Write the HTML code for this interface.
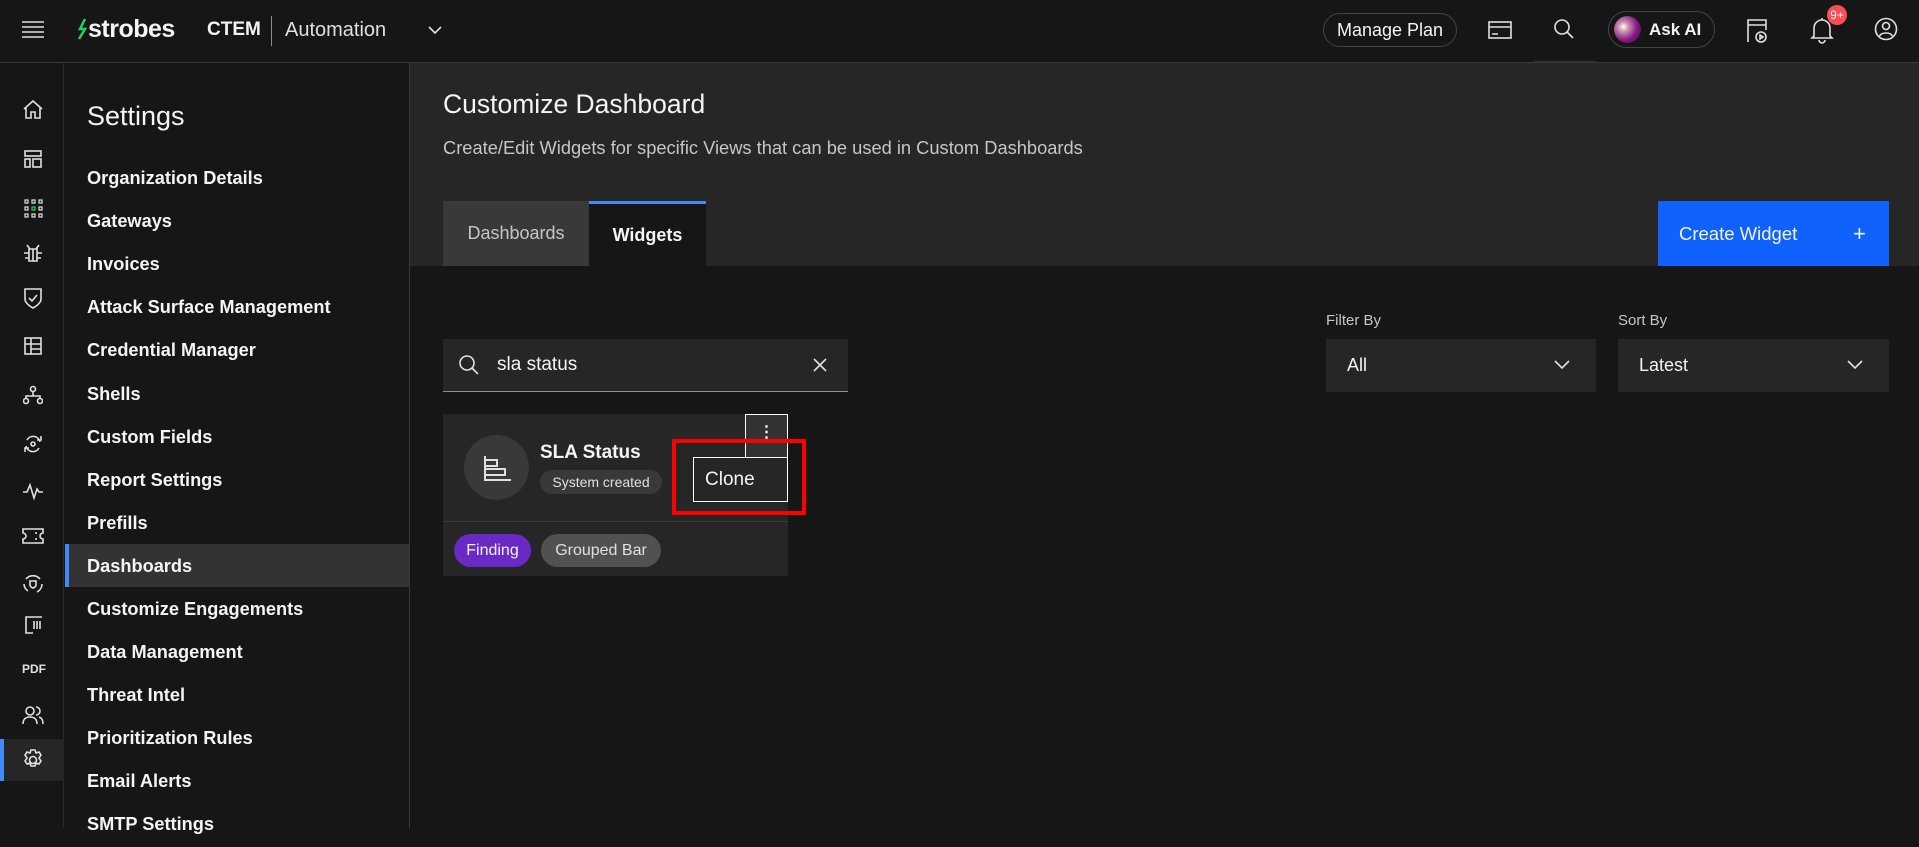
<!DOCTYPE html>
<html><head><meta charset="utf-8"><style>
*{box-sizing:border-box;margin:0;padding:0}
body{width:1919px;height:828px;overflow:hidden;background:#161616;font-family:"Liberation Sans",sans-serif;color:#f4f4f4;position:relative}
.a{position:absolute}
.hdr{left:0;top:0;width:1919px;height:63px;background:#161616;border-bottom:1px solid #393939}
.rail{left:0;top:63px;width:64px;height:765px;background:#161616;border-right:1px solid #2a2a2a}
.nav{left:65px;top:63px;width:345px;height:765px;background:#161616;border-right:1px solid #393939}
.ni{position:absolute;left:0;width:344px;height:43px;line-height:45px;padding-left:22px;font-size:18.2px;font-weight:bold;color:#f4f4f4}
.ni.act{background:#333;border-left:4px solid #4589ff;padding-left:18px}
.top{left:410px;top:63px;width:1509px;height:203px;background:#262626}
svg{position:absolute;fill:none;stroke:#e0e0e0;stroke-width:1.6}
.chip{position:absolute;border-radius:14px;font-size:15px;text-align:center}
</style></head><body>
<div class="a hdr"></div>
<!-- header -->
<svg style="left:21px;top:20px" width="24" height="18"><path d="M1 2h22M1 7h22M1 12h22M1 17h22"/></svg>
<svg style="left:76px;top:17px;stroke:#24d160;stroke-width:2.5" width="12" height="24"><path d="M9 2L4 12h5L3 22"/></svg>
<div class="a" style="left:88px;top:15px;font-size:25px;font-weight:bold;color:#f4f4f4;letter-spacing:-0.5px">strobes</div>
<div class="a" style="left:207px;top:19px;font-size:19px;font-weight:bold">CTEM</div>
<div class="a" style="left:271px;top:16px;width:1px;height:30px;background:#8d8d8d"></div>
<div class="a" style="left:285px;top:19px;font-size:20px;color:#e0e0e0">Automation</div>
<svg style="left:427px;top:24px" width="16" height="12"><path d="M2 3l6 6 6-6"/></svg>
<div class="a" style="left:1323px;top:13px;width:134px;height:34px;border:1px solid #444;border-radius:17px;font-size:18px;line-height:32px;text-align:center">Manage Plan</div>
<svg style="left:1488px;top:20px" width="24" height="20"><rect x="1" y="2" width="22" height="16"/><path d="M1 7h22M4 14h6"/></svg>
<svg style="left:1553px;top:18px" width="22" height="22"><circle cx="9" cy="9" r="7"/><path d="M14 14l6 6"/></svg>
<div class="a" style="left:1534px;top:61px;width:61px;height:2px;background:#333"></div>
<div class="a" style="left:1608px;top:11px;width:107px;height:37px;border:1px solid #444;border-radius:19px"></div>
<div class="a" style="left:1614px;top:16px;width:27px;height:27px;border-radius:50%;background:radial-gradient(circle at 35% 40%,#fff 0,#c9a 20%,#8a1a8a 55%,#2a0a2a 100%)"></div>
<div class="a" style="left:1649px;top:20px;font-size:17px;font-weight:bold">Ask AI</div>
<svg style="left:1746px;top:18px" width="24" height="26"><path d="M2 24V2h18v10M2 7h18"/><circle cx="15" cy="19" r="5"/><path d="M14 17v4l3-2z"/></svg>
<svg style="left:1810px;top:16px" width="24" height="28"><path d="M4 20V12a8 8 0 0116 0v8l2 2H2zM9 24a3 3 0 006 0M12 2v2"/></svg>
<div class="a" style="left:1827px;top:5px;width:20px;height:20px;border-radius:10px;background:#fa4d56;font-size:12px;line-height:20px;text-align:center">9+</div>
<svg style="left:1874px;top:17px" width="24" height="24"><circle cx="12" cy="12" r="10.5"/><circle cx="12" cy="9" r="3.5"/><path d="M5.5 19c2-4 11-4 13 0"/></svg>
<!-- rail -->
<div class="a rail"></div>
<div class="a" style="left:0;top:739px;width:64px;height:42px;background:#262626;border-left:4px solid #4589ff"></div>
<svg style="left:22px;top:99px" width="22" height="20"><path d="M2 10L11 2l9 8M4 8v11h5v-6h4v6h5V8"/></svg>
<svg style="left:23px;top:149px" width="20" height="20"><rect x="2" y="2" width="16" height="5"/><rect x="2" y="10" width="5" height="8"/><rect x="10" y="10" width="8" height="8"/></svg>
<svg style="left:23px;top:198px;stroke-width:1.2" width="20" height="20"><path d="M2 2h3v3H2zM9 2h3v3H9zM16 2h3v3h-3zM2 9h3v3H2zM16 9h3v3h-3zM2 16h3v3H2zM9 16h3v3H9zM16 16h3v3h-3z"/><path d="M9 9h3v3H9z" stroke="#24d160"/></svg>
<svg style="left:22px;top:242px" width="22" height="22"><path d="M7 7h8v12H7zM11 7v12M7 11H2M15 11h5M7 16H3M15 16h4M8 7L5 3M14 7l3-4"/></svg>
<svg style="left:23px;top:287px" width="20" height="22"><path d="M2 2h16v10c0 5-8 9-8 9s-8-4-8-9z M6 11l3 3 5-6"/></svg>
<svg style="left:23px;top:336px" width="20" height="20"><rect x="2" y="2" width="16" height="16"/><path d="M2 8h16M8 2v16M8 13h10"/></svg>
<svg style="left:23px;top:385px" width="20" height="20"><circle cx="10" cy="4" r="2.5"/><circle cx="3" cy="16" r="2.5"/><circle cx="17" cy="16" r="2.5"/><path d="M10 7v4M3 13v-2h14v2"/></svg>
<svg style="left:23px;top:434px" width="20" height="20"><path d="M17 8a7 7 0 00-13-2M3 12a7 7 0 0013 2M14 6h4V2M6 14H2v4"/><circle cx="10" cy="10" r="2"/></svg>
<svg style="left:22px;top:481px" width="22" height="20"><path d="M1 11h4l3-7 4 13 3-9 2 3h4"/></svg>
<svg style="left:22px;top:527px" width="22" height="18"><path d="M1 2h20v4a3 3 0 000 6v4H1v-4a3 3 0 000-6z M14 5v2M14 11v2"/></svg>
<svg style="left:22px;top:573px" width="22" height="22"><path d="M4 6a9 9 0 0114 0M20 11a9 9 0 01-5 8M2 11a9 9 0 004 7"/><path d="M8 8h6v4c0 2-3 3-3 3s-3-1-3-3z"/></svg>
<svg style="left:24px;top:615px" width="20" height="20"><path d="M9 2H2v16h7M7 2h11M13 6v8M16 6v8M10 6v8"/></svg>
<div class="a" style="left:22px;top:662px;font-size:12px;font-weight:bold;color:#e0e0e0">PDF</div>
<svg style="left:22px;top:704px" width="22" height="22"><circle cx="8" cy="7" r="4"/><path d="M1 20c0-5 3-7 7-7s7 2 7 7M14 3a4 4 0 010 8M17 13c3 1 4 3 4 7"/></svg>
<svg style="left:22px;top:749px" width="22" height="22"><circle cx="11" cy="11" r="3.5"/><path d="M9 1h4l1 3 3-1 2 3-2 3 2 3-2 3-3-1-1 3h-4l-1-3-3 1-2-3 2-3-2-3 2-3 3 1z"/></svg>
<!-- nav -->
<div class="a nav">
<div class="a" style="left:22px;top:38px;font-size:27px;color:#f4f4f4">Settings</div>
<div class="ni" style="top:93px">Organization Details</div>
<div class="ni" style="top:136px">Gateways</div>
<div class="ni" style="top:179px">Invoices</div>
<div class="ni" style="top:222px">Attack Surface Management</div>
<div class="ni" style="top:265px">Credential Manager</div>
<div class="ni" style="top:309px">Shells</div>
<div class="ni" style="top:352px">Custom Fields</div>
<div class="ni" style="top:395px">Report Settings</div>
<div class="ni" style="top:438px">Prefills</div>
<div class="ni act" style="top:481px">Dashboards</div>
<div class="ni" style="top:524px">Customize Engagements</div>
<div class="ni" style="top:567px">Data Management</div>
<div class="ni" style="top:610px">Threat Intel</div>
<div class="ni" style="top:653px">Prioritization Rules</div>
<div class="ni" style="top:696px">Email Alerts</div>
<div class="ni" style="top:739px">SMTP Settings</div>
</div>
<!-- content -->
<div class="a top"></div>
<div class="a" style="left:443px;top:89px;font-size:26.5px;color:#f4f4f4">Customize Dashboard</div>
<div class="a" style="left:443px;top:137px;font-size:18.3px;color:#c6c6c6">Create/Edit Widgets for specific Views that can be used in Custom Dashboards</div>
<div class="a" style="left:443px;top:201px;width:146px;height:65px;background:#393939;font-size:18px;line-height:65px;text-align:center;color:#c6c6c6">Dashboards</div>
<div class="a" style="left:589px;top:201px;width:117px;height:65px;background:#161616;border-top:3px solid #4589ff;font-size:18px;font-weight:bold;line-height:62px;text-align:center">Widgets</div>
<div class="a" style="left:1658px;top:201px;width:231px;height:65px;background:#0f62fe;font-size:18.5px;line-height:65px;padding-left:21px">Create Widget<span style="position:absolute;left:195px;font-size:22px">+</span></div>
<div class="a" style="left:1326px;top:312px;font-size:15px;color:#c6c6c6">Filter By</div>
<div class="a" style="left:1326px;top:339px;width:270px;height:53px;background:#262626;font-size:18px;line-height:53px;padding-left:21px">All</div>
<svg style="left:1553px;top:359px" width="18" height="12"><path d="M2 2l7 7 7-7"/></svg>
<div class="a" style="left:1618px;top:312px;font-size:15px;color:#c6c6c6">Sort By</div>
<div class="a" style="left:1618px;top:339px;width:271px;height:53px;background:#262626;font-size:18px;line-height:53px;padding-left:21px">Latest</div>
<svg style="left:1846px;top:359px" width="18" height="12"><path d="M2 2l7 7 7-7"/></svg>
<!-- search -->
<div class="a" style="left:443px;top:339px;width:405px;height:53px;background:#262626;border-bottom:1px solid #8d8d8d"></div>
<svg style="left:458px;top:354px" width="22" height="22"><circle cx="9" cy="9" r="7"/><path d="M14 14l6 6"/></svg>
<div class="a" style="left:497px;top:354px;font-size:19px">sla status</div>
<svg style="left:813px;top:358px" width="14" height="14"><path d="M1 1l12 12M13 1L1 13"/></svg>
<!-- card -->
<div class="a" style="left:443px;top:414px;width:345px;height:162px;background:#262626"></div>
<div class="a" style="left:443px;top:521px;width:345px;height:1px;background:#393939"></div>
<div class="a" style="left:464px;top:435px;width:65px;height:65px;border-radius:50%;background:#393939"></div>
<svg style="left:483px;top:454px" width="30" height="28"><path d="M2 2v24h26M2 6h12v6H2M2 15h20v6H2" stroke-width="2"/></svg>
<div class="a" style="left:540px;top:442px;font-size:19px;font-weight:bold">SLA Status</div>
<div class="chip" style="left:540px;top:470px;width:122px;height:24px;line-height:24px;background:#393939;font-size:14px;color:#e0e0e0">System created</div>
<div class="chip" style="left:454px;top:534px;width:77px;height:33px;line-height:33px;background:#6929c4;border-radius:17px;font-size:16px">Finding</div>
<div class="chip" style="left:541px;top:534px;width:120px;height:33px;line-height:33px;background:#525050;border-radius:17px;font-size:16px;color:#e0e0e0">Grouped Bar</div>
<div class="a" style="left:745px;top:414px;width:43px;height:44px;background:#333;border:1px solid #fff;font-size:16px;line-height:36px;text-align:center;font-weight:bold">⋮</div>
<div class="a" style="left:693px;top:457px;width:95px;height:45px;background:#262626;border:1px solid #fff;font-size:19px;line-height:43px;padding-left:11px">Clone</div>
<div class="a" style="left:672px;top:439px;width:134px;height:76px;border:4px solid #ff0000"></div>
</body></html>
